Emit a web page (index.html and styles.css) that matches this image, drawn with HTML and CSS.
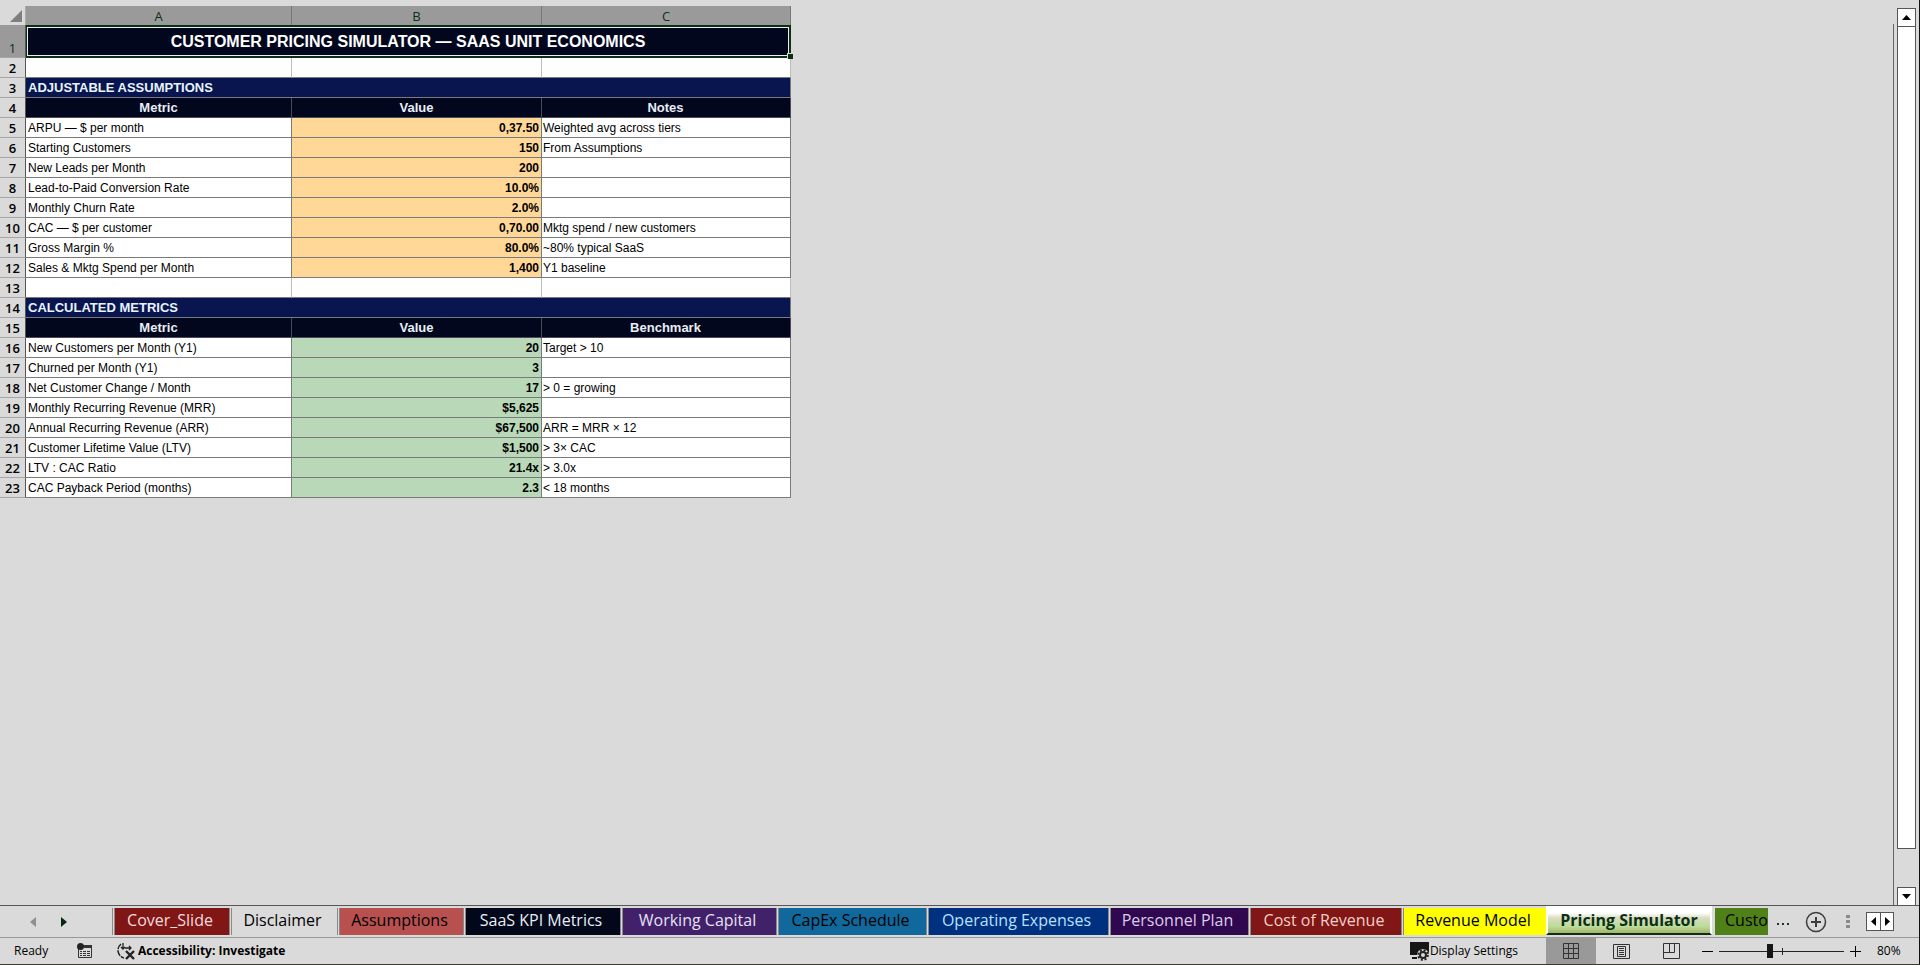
FILE: index.html
```html
<!DOCTYPE html>
<html lang="en">
<head>
<meta charset="utf-8">
<title>Customer Pricing Simulator</title>
<link rel="stylesheet" href="styles.css">
</head>
<body>
<div class="app">
  <main class="workspace">
    <div class="grid-area">
      <table class="sheet">
        <colgroup><col class="col-num"><col class="col-a"><col class="col-b"><col class="col-c"></colgroup>
        <thead>
          <tr><th class="corner"><svg width="12" height="12" viewBox="0 0 12 12"><path d="M12 0V12H0Z" fill="#7f7f7f"/></svg></th><th>A</th><th>B</th><th>C</th></tr>
        </thead>
        <tbody>
          <tr class="title-row"><th>1</th><td colspan="3" class="title">CUSTOMER PRICING SIMULATOR — SAAS UNIT ECONOMICS<span class="fill-handle"></span></td></tr>
          <tr class="blank"><th>2</th><td></td><td></td><td></td></tr>
          <tr class="section"><th>3</th><td colspan="3">ADJUSTABLE ASSUMPTIONS</td></tr>
          <tr class="heads"><th>4</th><td>Metric</td><td>Value</td><td>Notes</td></tr>
          <tr class="input"><th>5</th><td>ARPU — $ per month</td><td>0,37.50</td><td>Weighted avg across tiers</td></tr>
          <tr class="input"><th>6</th><td>Starting Customers</td><td>150</td><td>From Assumptions</td></tr>
          <tr class="input"><th>7</th><td>New Leads per Month</td><td>200</td><td></td></tr>
          <tr class="input"><th>8</th><td>Lead-to-Paid Conversion Rate</td><td>10.0%</td><td></td></tr>
          <tr class="input"><th>9</th><td>Monthly Churn Rate</td><td>2.0%</td><td></td></tr>
          <tr class="input"><th>10</th><td>CAC — $ per customer</td><td>0,70.00</td><td>Mktg spend / new customers</td></tr>
          <tr class="input"><th>11</th><td>Gross Margin %</td><td>80.0%</td><td>~80% typical SaaS</td></tr>
          <tr class="input"><th>12</th><td>Sales &amp; Mktg Spend per Month</td><td>1,400</td><td>Y1 baseline</td></tr>
          <tr class="blank"><th>13</th><td></td><td></td><td></td></tr>
          <tr class="section"><th>14</th><td colspan="3">CALCULATED METRICS</td></tr>
          <tr class="heads"><th>15</th><td>Metric</td><td>Value</td><td>Benchmark</td></tr>
          <tr class="calc"><th>16</th><td>New Customers per Month (Y1)</td><td>20</td><td>Target &gt; 10</td></tr>
          <tr class="calc"><th>17</th><td>Churned per Month (Y1)</td><td>3</td><td></td></tr>
          <tr class="calc"><th>18</th><td>Net Customer Change / Month</td><td>17</td><td>&gt; 0 = growing</td></tr>
          <tr class="calc"><th>19</th><td>Monthly Recurring Revenue (MRR)</td><td>$5,625</td><td></td></tr>
          <tr class="calc"><th>20</th><td>Annual Recurring Revenue (ARR)</td><td>$67,500</td><td>ARR = MRR × 12</td></tr>
          <tr class="calc"><th>21</th><td>Customer Lifetime Value (LTV)</td><td>$1,500</td><td>&gt; 3× CAC</td></tr>
          <tr class="calc"><th>22</th><td>LTV : CAC Ratio</td><td>21.4x</td><td>&gt; 3.0x</td></tr>
          <tr class="calc"><th>23</th><td>CAC Payback Period (months)</td><td>2.3</td><td>&lt; 18 months</td></tr>
        </tbody>
      </table>
    </div>
    <div class="vscroll">
      <button class="scroll-btn" aria-label="Scroll up"><svg width="9" height="5" viewBox="0 0 9 5"><path d="M0 5L4.500 0L9 5Z"/></svg></button>
      <div class="thumb"></div>
      <button class="scroll-btn" aria-label="Scroll down"><svg width="9" height="5" viewBox="0 0 9 5"><path d="M0 0H9L4.500 5Z"/></svg></button>
    </div>
  </main>

  <nav class="tabbar">
    <div class="tab-nav">
      <button aria-label="Previous sheet"><svg width="6" height="10" viewBox="0 0 6 10"><path d="M6 0V10L0 5Z" fill="#8f8f8f"/></svg></button>
      <button aria-label="Next sheet"><svg width="6" height="10" viewBox="0 0 6 10"><path d="M0 0V10L6 5Z" fill="#062b10"/></svg></button>
    </div>
    <div class="tabs">
      <button class="tab cover">Cover_Slide</button>
      <button class="tab disclaimer">Disclaimer</button>
      <button class="tab assumptions">Assumptions</button>
      <button class="tab kpi">SaaS KPI Metrics</button>
      <button class="tab working">Working Capital</button>
      <button class="tab capex">CapEx Schedule</button>
      <button class="tab opex">Operating Expenses</button>
      <button class="tab personnel">Personnel Plan</button>
      <button class="tab cost">Cost of Revenue</button>
      <button class="tab revenue">Revenue Model</button>
      <button class="tab active">Pricing Simulator</button>
      <button class="tab customers">Custo</button>
    </div>
    <div class="tab-tools">
      <button class="more" aria-label="More sheets"><svg width="13" height="3" viewBox="0 0 13 3"><path d="M0 0H2V2H0ZM5 0H7V2H5ZM10 0H12V2H10Z" fill="#173a20"/></svg></button>
      <button aria-label="New sheet"><svg width="22" height="22" viewBox="0 0 22 22" fill="none" stroke="#3c3c3c"><circle cx="11" cy="11" r="9.500" stroke-width="1.500"/><path d="M11 6V16M6 11H16" stroke-width="2"/></svg></button>
      <svg class="grip" width="4" height="14" viewBox="0 0 4 14"><path d="M0 0H4V3H0ZM0 5H4V8H0ZM0 10H4V13H0Z" fill="#8a8a8a"/></svg>
      <div class="hscroll">
        <button aria-label="Scroll left"><svg width="5" height="9" viewBox="0 0 5 9"><path d="M5 0V9L0 4.500Z"/></svg></button>
        <button aria-label="Scroll right"><svg width="5" height="9" viewBox="0 0 5 9"><path d="M0 0V9L5 4.500Z"/></svg></button>
      </div>
    </div>
  </nav>

  <footer class="status">
    <span class="ready">Ready</span>
    <button class="macro" aria-label="Record macro"><svg width="16" height="16" viewBox="0 0 16 16"><path d="M1.500 6V14.500H14.500V2.500H6" fill="none" stroke="#333"/><path d="M7 2H15V5H7Z" fill="#333"/><circle cx="3.500" cy="3.500" r="3.500" fill="#222"/><path d="M3 8.500H5M6 8.500H9M10 8.500H13M3 10.500H5M6 10.500H9M10 10.500H13M3 12.500H5M6 12.500H9M10 12.500H13" stroke="#333"/></svg></button>
    <button class="access"><svg width="20" height="18" viewBox="0 0 20 18" fill="none" stroke="#222"><path d="M5 2A8 8 0 0 0 8 16" stroke-width="1.500" stroke-dasharray="6 1"/><path d="M7 1V7M5 5L7 7L9 5M9 6H15M13 4L15 6L13 8" stroke-width="1.300"/><path d="M10 9L18 17M18 9L10 17" stroke-width="2.400"/></svg>Accessibility: Investigate</button>
    <div class="status-right">
      <button class="display"><svg width="20" height="19" viewBox="0 0 20 19"><path d="M1 0H20V13H1ZM3 15H8V17H3Z" fill="#161616"/><g fill="none" stroke="#222"><circle cx="14" cy="13" r="6" fill="#dadada" stroke="none"/><circle cx="14" cy="13" r="3" stroke-width="2"/><circle cx="14" cy="13" r="4.800" stroke-width="2" stroke-dasharray="2 1.770"/></g></svg>Display Settings</button>
      <button class="view current" aria-label="Normal view"><svg width="16" height="16" viewBox="0 0 16 16" fill="none" stroke="#333"><path d="M.5.5H15.500V15.500H.5ZM.5 5.500H15.500M.5 10.500H15.500M5.500.5V15.500M10.500.5V15.500"/></svg></button>
      <button class="view" aria-label="Page layout"><svg width="17" height="15" viewBox="0 0 17 15" fill="none" stroke="#333"><path d="M.5.5H16.500V14.500H.5ZM4.500 2.500H12.500V12.500H4.500ZM6 4.500H11M6 6.500H11M6 8.500H11M6 10.500H11"/></svg></button>
      <button class="view" aria-label="Page break preview"><svg width="17" height="16" viewBox="0 0 17 16" fill="none" stroke="#333"><path d="M.5.5H16.500V15.500H.5ZM6.500.5V9.500M.5 9.500H11.500V.5"/></svg></button>
      <div class="zoom">
        <button aria-label="Zoom out"><svg width="11" height="11" viewBox="0 0 11 11"><path d="M0 5H11V6H0Z"/></svg></button>
        <input type="range" min="10" max="190" value="82" aria-label="Zoom">
        <button aria-label="Zoom in"><svg width="11" height="11" viewBox="0 0 11 11"><path d="M0 5H5V0H6V5H11V6H6V11H5V6H0Z"/></svg></button>
        <span class="percent">80%</span>
      </div>
    </div>
  </footer>
</div>
</body>
</html>
```

FILE: styles.css
```css
* { box-sizing: border-box; }

body {
  margin: 0;
  background: #dadada;
  color: #000;
  font-family: "Open Sans", "Noto Sans", sans-serif;
}

button {
  margin: 0;
  padding: 0;
  border: 0;
  background: none;
  color: inherit;
  font: inherit;
  display: flex;
  align-items: center;
  justify-content: center;
}

svg { display: block; flex: none; }

.app {
  display: flex;
  flex-direction: column;
  height: 100vh;
  border-right: 1px solid #111;
  border-bottom: 1px solid #3a3a30;
}

.workspace { flex: 1; display: flex; min-height: 0; }

.grid-area { flex: 1; padding-top: 6px; overflow: hidden; }

/* Worksheet */
.sheet {
  table-layout: fixed;
  width: 791px;
  border-collapse: separate;
  border-spacing: 0;
  font-family: "Liberation Sans", Arial, sans-serif;
  font-size: 12px;
  line-height: 18px;
}

.col-num { width: 26px; }
.col-a { width: 266px; }
.col-b { width: 250px; }
.col-c { width: 249px; }

.sheet th, .sheet td { padding: 0 2px; height: 20px; white-space: nowrap; }

.sheet th {
  font-family: "Open Sans", "Noto Sans", sans-serif;
  font-size: 13px;
  font-weight: 600;
  padding: 1px 0 0;
  border-right: 1px solid #555;
  border-bottom: 1px solid #a6a6a6;
}

.sheet thead th {
  height: 19px;
  padding: 0;
  font-weight: 400;
  background: #9a9a9a;
  color: #0b3016;
  border-right-color: #777;
  border-bottom: 0;
}

.sheet thead .corner { background: #dadada; padding-left: 10px; border-right-color: #aaa; }

.sheet td {
  background: #fff;
  border-right: 1px solid #7a7a7a;
  border-bottom: 1px solid #7a7a7a;
}

.sheet td:nth-child(4) { padding-left: 1px; }

.sheet .blank td { border-right-color: #bdbdbd; }

.sheet .title-row th {
  height: 33px;
  vertical-align: bottom;
  font-weight: 400;
  background: #9a9a9a;
  color: #0b3016;
}

.sheet .title {
  position: relative;
  background: #03071e;
  color: #fff;
  font-size: 16px;
  font-weight: 700;
  text-align: center;
  border: 2px solid #0b3016;
  border-left-width: 1px;
  box-shadow: inset 0 0 0 1px #e8f0e8;
}

.fill-handle {
  position: absolute;
  right: -4px;
  bottom: -3px;
  width: 6px;
  height: 6px;
  background: #0b3016;
  border: 1px solid #dadada;
  border-width: 1px 0 0 1px;
}

.sheet .section td { background: #08154f; color: #e8f4fb; font-size: 13px; font-weight: 700; }

.sheet .heads td { background: #03071e; color: #e8eef5; font-size: 13px; font-weight: 700; text-align: center; border-color: #4a4a58; }

.input td:nth-child(3), .calc td:nth-child(3) { text-align: right; font-weight: 700; }
.sheet .input td:nth-child(3) { background: #ffd898; }
.sheet .calc td:nth-child(3) { background: #b8d8b8; }

/* Vertical scroll bar */
.vscroll {
  width: 26px;
  margin-top: 8px;
  padding: 0 3px;
  display: flex;
  flex-direction: column;
  background: linear-gradient(#666, #666) 0 16px / 1px 100% no-repeat;
}

.scroll-btn { flex: none; width: 19px; height: 19px; margin-left: 1px; background: #fff; border: 1px solid #555; }
.scroll-btn:last-child { margin-bottom: -1px; }
.thumb { width: 19px; flex: 0 1 822px; margin: 0 0 auto 1px; background: #fff; border: 1px solid #555; border-top: 0; }

/* Sheet tabs */
.tabbar {
  display: flex;
  height: 33px;
  border-top: 1px solid #555;
  border-bottom: 1px solid #999;
  font-size: 16px;
  line-height: 24px;
}

.tab-nav { width: 112px; padding: 0 45px 0 30px; display: flex; justify-content: space-between; }

.tabs { display: flex; min-width: 0; overflow: hidden; }

.tab {
  flex: none;
  height: 27px;
  margin: 2px 0 0;
  padding: 0 4px 4px 0;
  white-space: nowrap;
  background-clip: padding-box;
  border-left: 3px double #8a8a8a;
}

.cover { width: 117px; background-color: #801616; color: #f5dcdc; }
.disclaimer { width: 108px; }
.assumptions { width: 126px; background-color: #b85050; font-weight: 500; }
.kpi { width: 157px; background-color: #02071a; color: #e6eef8; }
.working { width: 156px; background-color: #41226a; color: #e6e0f4; }
.capex { width: 150px; background-color: #10689c; font-weight: 500; }
.opex { width: 182px; background-color: #003080; color: #b8e0ff; }
.personnel { width: 140px; background-color: #300850; color: #dccbe8; }
.cost { width: 153px; background-color: #801616; color: #f5d0c4; }
.revenue { width: 145px; background-color: #ffff00; font-weight: 500; }

.active {
  width: 166px;
  height: 29px;
  margin-top: 0;
  padding: 0 0 2px;
  background: linear-gradient(#fff 20%, #dcdcc0 40%, #b8dc98 75%, #a8b068);
  border: 2px solid #fff;
  border-bottom: 2px solid #0b3016;
  color: #0b3016;
  font-weight: 700;
}

.customers { width: 56px; padding-left: 10px; justify-content: flex-start; overflow: hidden; background-color: #508018; border-left-color: #dadada; }

.tab-tools { display: flex; align-items: center; margin-left: auto; padding-right: 25px; }
.more { margin-right: 15px; padding-top: 6px; }
.grip { margin: 0 16px 0 19px; }
.hscroll { display: flex; border: 1px solid #555; background: #fff; }
.hscroll button { width: 13px; height: 17px; }
.hscroll button + button { border-left: 1px solid #555; }

/* Status bar */
.status { display: flex; align-items: center; height: 26px; font-size: 12px; line-height: 16px; }
.ready { margin-left: 14px; width: 63px; }
.access { margin-left: 23px; gap: 2px; font-weight: 700; }
.status-right { margin-left: auto; height: 100%; display: flex; align-items: center; }
.display { gap: 1px; margin-right: 28px; }
.view { width: 50px; height: 100%; }
.current { background: #999; }

.zoom { display: flex; align-items: center; margin-left: 6px; }
.zoom input {
  appearance: none;
  width: 125px;
  height: 16px;
  margin: 0 6px;
  background: linear-gradient(#222, #222) 63px 50% / 1px 7px no-repeat, linear-gradient(#222, #222) 0 50% / 100% 1px no-repeat;
}
.zoom input::-webkit-slider-thumb { appearance: none; width: 6px; height: 14px; background: #161616; }
.percent { width: 42px; margin-left: 16px; }
```
